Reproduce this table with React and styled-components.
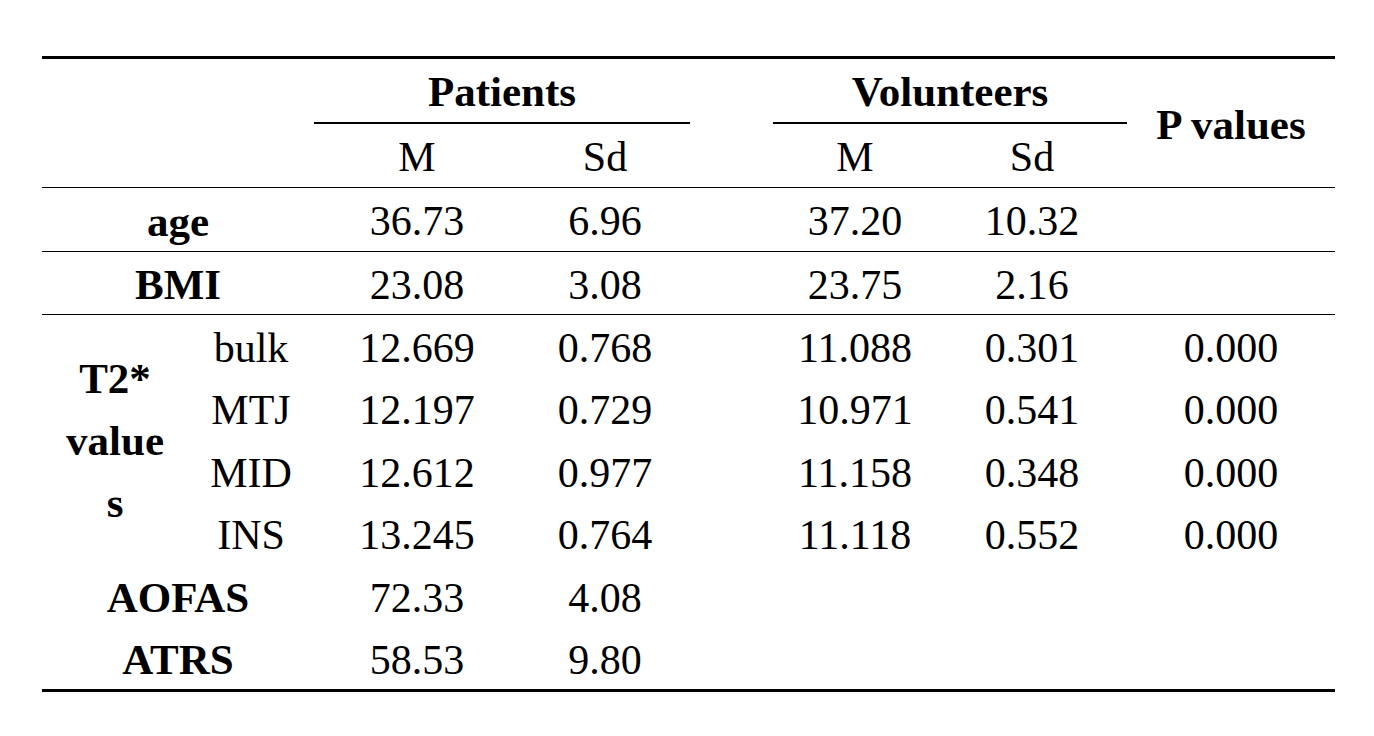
import styled, { createGlobalStyle } from "styled-components";

const GlobalStyle = createGlobalStyle`
  body {
    margin: 0;
    background: #fff;
    font-family: "Liberation Serif", "Times New Roman", serif;
    color: #000;
  }
`;

const Page = styled.div`
  padding: 56px 0 0 42px;
`;

const Table = styled.table`
  width: 1293px;
  table-layout: fixed;
  border-collapse: collapse;
  font-size: 42px;
  line-height: 1;
`;

const Col = styled.col`
  width: ${(p) => p.$w}px;
`;

const HeadRow = styled.tr`
  height: ${(p) => p.$h}px;
  border-top: ${(p) => (p.$top ? "3px solid #000" : "none")};
  border-bottom: ${(p) => (p.$bottom ? "1px solid #000" : "none")};
`;

const Head = styled.th`
  font-weight: ${(p) => (p.$bold ? 700 : 400)};
  font-size: ${(p) => (p.$bold ? 43 : 42)}px;
  text-align: center;
  vertical-align: middle;
  padding: 3px 0 0;
  border-bottom: ${(p) => (p.$under ? "2px solid #000" : "none")};
`;

const Row = styled.tr`
  height: ${(p) => p.$h}px;
  border-bottom: ${(p) =>
    p.$line === "thin" ? "1px solid #000" : p.$line === "thick" ? "3px solid #000" : "none"};
`;

const Label = styled.td`
  font-weight: 700;
  font-size: 43px;
  text-align: center;
  vertical-align: middle;
  padding: 3px 0 0;
`;

const GroupLabel = styled(Label)`
  line-height: 62px;
`;

const Cell = styled.td`
  text-align: center;
  vertical-align: middle;
  padding: 3px 0 0;
`;

const simple = [
  { label: "age", pm: "36.73", ps: "6.96", vm: "37.20", vs: "10.32", h: 64 },
  { label: "BMI", pm: "23.08", ps: "3.08", vm: "23.75", vs: "2.16", h: 63 },
];

const t2 = [
  { sub: "bulk", pm: "12.669", ps: "0.768", vm: "11.088", vs: "0.301", p: "0.000", h: 63 },
  { sub: "MTJ", pm: "12.197", ps: "0.729", vm: "10.971", vs: "0.541", p: "0.000", h: 62 },
  { sub: "MID", pm: "12.612", ps: "0.977", vm: "11.158", vs: "0.348", p: "0.000", h: 63 },
  { sub: "INS", pm: "13.245", ps: "0.764", vm: "11.118", vs: "0.552", p: "0.000", h: 62 },
];

const scores = [
  { label: "AOFAS", pm: "72.33", ps: "4.08", h: 63 },
  { label: "ATRS", pm: "58.53", ps: "9.80", h: 63, line: "thick" },
];

export default function App() {
  return (
    <Page>
      <GlobalStyle />
      <Table>
        <colgroup>
          <Col $w={146} />
          <Col $w={126} />
          <Col $w={206} />
          <Col $w={170} />
          <Col $w={83} />
          <Col $w={164} />
          <Col $w={190} />
          <Col $w={208} />
        </colgroup>
        <thead>
          <HeadRow $h={65} $top>
            <Head colSpan={2} rowSpan={2} />
            <Head colSpan={2} $bold $under>
              Patients
            </Head>
            <Head rowSpan={2} />
            <Head colSpan={2} $bold $under>
              Volunteers
            </Head>
            <Head rowSpan={2} $bold>
              P values
            </Head>
          </HeadRow>
          <HeadRow $h={65} $bottom>
            <Head>M</Head>
            <Head>Sd</Head>
            <Head>M</Head>
            <Head>Sd</Head>
          </HeadRow>
        </thead>
        <tbody>
          {simple.map((r) => (
            <Row key={r.label} $h={r.h} $line="thin">
              <Label colSpan={2}>{r.label}</Label>
              <Cell>{r.pm}</Cell>
              <Cell>{r.ps}</Cell>
              <Cell />
              <Cell>{r.vm}</Cell>
              <Cell>{r.vs}</Cell>
              <Cell />
            </Row>
          ))}
          {t2.map((r, i) => (
            <Row key={r.sub} $h={r.h}>
              {i === 0 && (
                <GroupLabel rowSpan={4}>
                  T2*
                  <br />
                  value
                  <br />s
                </GroupLabel>
              )}
              <Cell>{r.sub}</Cell>
              <Cell>{r.pm}</Cell>
              <Cell>{r.ps}</Cell>
              <Cell />
              <Cell>{r.vm}</Cell>
              <Cell>{r.vs}</Cell>
              <Cell>{r.p}</Cell>
            </Row>
          ))}
          {scores.map((r) => (
            <Row key={r.label} $h={r.h} $line={r.line}>
              <Label colSpan={2}>{r.label}</Label>
              <Cell>{r.pm}</Cell>
              <Cell>{r.ps}</Cell>
              <Cell />
              <Cell />
              <Cell />
              <Cell />
            </Row>
          ))}
        </tbody>
      </Table>
    </Page>
  );
}
